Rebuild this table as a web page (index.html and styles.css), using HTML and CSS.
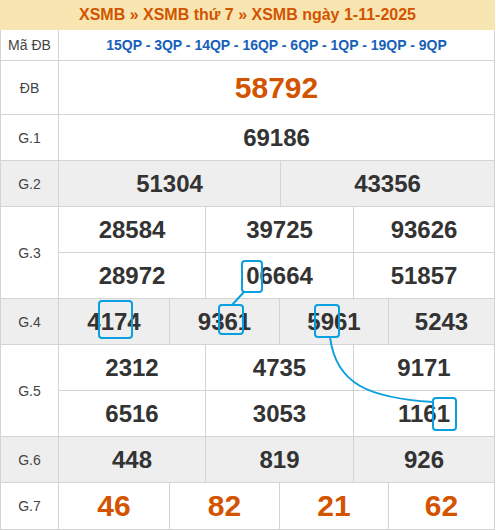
FILE: index.html
```html
<!DOCTYPE html>
<html lang="vi">
<head>
<meta charset="utf-8">
<title>XSMB ngày 1-11-2025</title>
<link rel="stylesheet" href="styles.css">
</head>
<body>
<div class="page">
  <div class="title">XSMB » XSMB thứ 7 » XSMB ngày 1-11-2025</div>
  <div class="board">
    <div class="row r-code">
      <div class="lbl">Mã ĐB</div>
      <div class="cell codes">15QP - 3QP - 14QP - 16QP - 6QP - 1QP - 19QP - 9QP</div>
    </div>
    <div class="row r-db">
      <div class="lbl">ĐB</div>
      <div class="cell big">58792</div>
    </div>
    <div class="row c1">
      <div class="lbl">G.1</div>
      <div class="cell">69186</div>
    </div>
    <div class="row c2 gray">
      <div class="lbl">G.2</div>
      <div class="cell">51304</div>
      <div class="cell">43356</div>
    </div>
    <div class="row c3 two">
      <div class="lbl span2">G.3</div>
      <div class="cell">28584</div>
      <div class="cell">39725</div>
      <div class="cell">93626</div>
      <div class="cell">28972</div>
      <div class="cell">06664</div>
      <div class="cell">51857</div>
    </div>
    <div class="row c4 gray">
      <div class="lbl">G.4</div>
      <div class="cell">4174</div>
      <div class="cell">9361</div>
      <div class="cell">5961</div>
      <div class="cell">5243</div>
    </div>
    <div class="row c3 two">
      <div class="lbl span2">G.5</div>
      <div class="cell">2312</div>
      <div class="cell">4735</div>
      <div class="cell">9171</div>
      <div class="cell">6516</div>
      <div class="cell">3053</div>
      <div class="cell">1161</div>
    </div>
    <div class="row c3 gray">
      <div class="lbl">G.6</div>
      <div class="cell">448</div>
      <div class="cell">819</div>
      <div class="cell">926</div>
    </div>
    <div class="row c4 r-last">
      <div class="lbl">G.7</div>
      <div class="cell big">46</div>
      <div class="cell big">82</div>
      <div class="cell big">21</div>
      <div class="cell big">62</div>
    </div>
  </div>
  <svg class="marks" width="496" height="530" viewBox="0 0 496 530" aria-hidden="true">
    <g fill="none" stroke="#0a9fe0" stroke-width="2" stroke-linecap="round">
      <rect x="242" y="261" width="20" height="31" rx="3"/>
      <rect x="219" y="305" width="24" height="29" rx="3"/>
      <rect x="99" y="301" width="33" height="37" rx="3"/>
      <rect x="315" y="305" width="24" height="32" rx="3"/>
      <rect x="433" y="398" width="23" height="32" rx="3"/>
      <line x1="244" y1="292" x2="232" y2="305"/>
      <path d="M330 337 C 336 385, 370 398, 433 402"/>
    </g>
  </svg>
</div>
</body>
</html>
```
FILE: styles.css
```css
* { box-sizing: border-box; }
html, body { margin: 0; padding: 0; background: #fff; }
body { font-family: "Liberation Sans", Arial, sans-serif; color: #333; }
.page { position: relative; width: 496px; height: 530px; }
.title {
  width: 495px; height: 30px;
  background: #f8e6b2;
  color: #d35400;
  font-weight: bold; font-size: 16px;
  display: flex; align-items: center; justify-content: center;
}
.board { width: 495px; border-left: 1px solid #d4d4d4; }
.row { display: grid; grid-template-columns: 58px 1fr; }
.row.c2 { grid-template-columns: 58px 222px 214px; }
.row.c3 { grid-template-columns: 58px 147px 148px 141px; }
.row.c4 { grid-template-columns: 58px 111px 110px 109px 106px; }
.lbl, .cell {
  border-right: 1px solid #d4d4d4;
  border-bottom: 1px solid #d4d4d4;
  display: flex; align-items: center; justify-content: center;
  height: 46px;
}
.lbl { font-size: 14px; color: #444; }
.cell { font-size: 24px; font-weight: bold; color: #333; }
.span2 { grid-row: 1 / 3; height: 92px; }
.gray .lbl, .gray .cell { background: #eeeeee; }
.r-code .lbl, .r-code .cell { height: 31px; }
.codes { font-size: 14px; color: #1660b8; }
.r-db .lbl, .r-db .cell { height: 54px; }
.big { font-size: 30px; color: #d35400; }
.r-last .lbl, .r-last .cell { height: 47px; }
.marks { position: absolute; left: 0; top: 0; pointer-events: none; }
```
